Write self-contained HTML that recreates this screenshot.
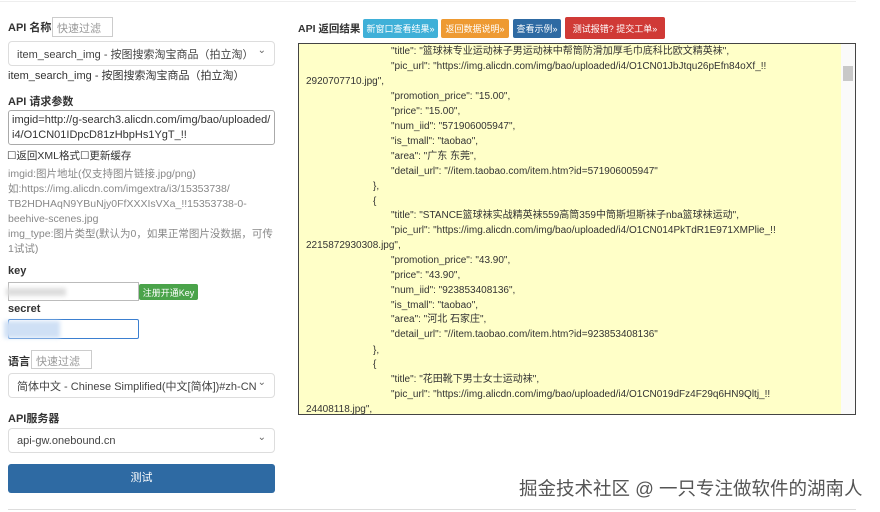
<!DOCTYPE html>
<html><head><meta charset="utf-8"><style>
*{box-sizing:border-box;margin:0;padding:0}
body{width:880px;height:512px;background:#fff;font-family:"Liberation Sans","Noto Sans CJK SC",sans-serif;font-size:11px;color:#333;position:relative;overflow:hidden}
.a{position:absolute;white-space:nowrap}
b{font-weight:bold}
.inp{position:absolute;border:1px solid #ccc;background:#fff;color:#999;padding:2px 4px;font-size:11px}
.sel{position:absolute;border:1px solid #ddd;border-radius:4px;background:#fff;color:#444;font-size:11px;padding:0 8px;display:flex;align-items:center}
.sel:after{content:"⌄";position:absolute;right:8px;top:3px;color:#666;font-size:10px}
.btn{position:absolute;color:#fff;font-size:9px;display:flex;align-items:center;justify-content:center;border-radius:2px;overflow:hidden;white-space:nowrap}
.ta{position:absolute;left:298px;top:43px;width:558px;height:372px;background:#ffffc8;border:1px solid #444;overflow:hidden}
.ta div{position:absolute;white-space:nowrap;font-size:10px;line-height:15px;height:15px;color:#333}
.gray{color:#888}
</style></head><body>
<div class="a" style="left:0;top:1px;width:856px;border-top:1px solid #eee"></div>
<div class="a" style="left:8px;top:19px"><b>API 名称</b></div>
<div class="inp" style="left:52px;top:17px;width:61px;height:20px">快速过滤</div>
<div class="sel" style="left:8px;top:41px;width:267px;height:25px">item_search_img - 按图搜索淘宝商品（拍立淘）</div>
<div class="a" style="left:8px;top:67px">item_search_img - 按图搜索淘宝商品（拍立淘）</div>
<div class="a" style="left:8px;top:93px"><b>API 请求参数</b></div>
<div class="a" style="left:8px;top:110px;width:267px;height:35px;border:1px solid #aaa;border-radius:3px;padding:2px 3px;font-size:11px;line-height:15px;color:#333">imgid=http://g-search3.alicdn.com/img/bao/uploaded/<br>i4/O1CN01IDpcD81zHbpHs1YgT_!!</div>
<div class="a" style="left:7px;top:148px;font-size:10.5px">☐返回XML格式☐更新缓存</div>
<div class="a gray" style="left:8px;top:167px;line-height:15px;font-size:10.5px">imgid:图片地址(仅支持图片链接.jpg/png)<br>如:https://img.alicdn.com/imgextra/i3/15353738/<br>TB2HDHAqN9YBuNjy0FfXXXIsVXa_!!15353738-0-<br>beehive-scenes.jpg<br>img_type:图片类型(默认为0，如果正常图片没数据，可传<br>1试试)</div>
<div class="a" style="left:8px;top:265px"><b>key</b></div>
<div class="a" style="left:8px;top:282px;width:131px;height:19px;border:1px solid #bbb"></div>
<div class="a" style="left:6px;top:288px;width:60px;height:8px;background:#ddd;filter:blur(2px)"></div>
<div class="btn" style="left:139px;top:284px;width:59px;height:16px;background:#4aa34a">注册开通Key</div>
<div class="a" style="left:8px;top:303px"><b>secret</b></div>
<div class="a" style="left:8px;top:319px;width:131px;height:20px;border:1px solid #3b7fd0;border-radius:2px"></div>
<div class="a" style="left:4px;top:321px;width:56px;height:17px;background:#cfe0f5;filter:blur(2px)"></div>
<div class="a" style="left:8px;top:353px"><b>语言</b></div>
<div class="inp" style="left:31px;top:350px;width:61px;height:19px">快速过滤</div>
<div class="sel" style="left:8px;top:373px;width:267px;height:25px">简体中文 - Chinese Simplified(中文[简体])#zh-CN</div>
<div class="a" style="left:8px;top:410px"><b>API服务器</b></div>
<div class="sel" style="left:8px;top:428px;width:267px;height:25px">api-gw.onebound.cn</div>
<div class="a" style="left:8px;top:464px;width:267px;height:29px;background:#2e6aa3;border-radius:3px;color:#fff;text-align:center;line-height:29px">测试</div>
<div class="a" style="left:8px;top:509px;width:848px;border-top:1px solid #ddd"></div>

<div class="a" style="left:298px;top:21px;font-size:10.5px"><b>API 返回结果</b></div>
<div class="btn" style="left:363px;top:19px;width:75px;height:19px;background:#3fb0d8">新窗口查看结果»</div>
<div class="btn" style="left:441px;top:19px;width:68px;height:19px;background:#ee9a32">返回数据说明»</div>
<div class="btn" style="left:513px;top:19px;width:48px;height:19px;background:#2e6aa3">查看示例»</div>
<div class="btn" style="left:565px;top:17px;width:100px;height:22px;background:#d03a36">测试报错? 提交工单»</div>

<div class="ta">
<div style="left:92px;top:0px">"title": "篮球袜专业运动袜子男运动袜中帮筒防滑加厚毛巾底科比欧文精英袜",</div>
<div style="left:92px;top:15px">"pic_url": "https://img.alicdn.com/img/bao/uploaded/i4/O1CN01JbJtqu26pEfn84oXf_!!</div>
<div style="left:7px;top:30px">2920707710.jpg",</div>
<div style="left:92px;top:45px">"promotion_price": "15.00",</div>
<div style="left:92px;top:60px">"price": "15.00",</div>
<div style="left:92px;top:75px">"num_iid": "571906005947",</div>
<div style="left:92px;top:90px">"is_tmall": "taobao",</div>
<div style="left:92px;top:105px">"area": "广东 东莞",</div>
<div style="left:92px;top:120px">"detail_url": "//item.taobao.com/item.htm?id=571906005947"</div>
<div style="left:74px;top:135px">},</div>
<div style="left:74px;top:150px">{</div>
<div style="left:92px;top:164px">"title": "STANCE篮球袜实战精英袜559高筒359中筒斯坦斯袜子nba篮球袜运动",</div>
<div style="left:92px;top:179px">"pic_url": "https://img.alicdn.com/img/bao/uploaded/i4/O1CN014PkTdR1E971XMPlie_!!</div>
<div style="left:7px;top:194px">2215872930308.jpg",</div>
<div style="left:92px;top:209px">"promotion_price": "43.90",</div>
<div style="left:92px;top:224px">"price": "43.90",</div>
<div style="left:92px;top:239px">"num_iid": "923853408136",</div>
<div style="left:92px;top:254px">"is_tmall": "taobao",</div>
<div style="left:92px;top:268px">"area": "河北 石家庄",</div>
<div style="left:92px;top:283px">"detail_url": "//item.taobao.com/item.htm?id=923853408136"</div>
<div style="left:74px;top:299px">},</div>
<div style="left:74px;top:313px">{</div>
<div style="left:92px;top:328px">"title": "花田靴下男士女士运动袜",</div>
<div style="left:92px;top:343px">"pic_url": "https://img.alicdn.com/img/bao/uploaded/i4/O1CN019dFz4F29q6HN9Qltj_!!</div>
<div style="left:7px;top:358px">24408118.jpg",</div>
<div style="left:542px;top:0;width:14px;height:370px;background:#fafafa"></div>
<div style="left:544px;top:22px;width:10px;height:15px;background:#c8c8c8"></div>
</div>
<div class="a" style="left:519px;top:475px;font-size:18.5px;color:#555;text-shadow:0 0 2px #fff">掘金技术社区 @ 一只专注做软件的湖南人</div>
</body></html>
